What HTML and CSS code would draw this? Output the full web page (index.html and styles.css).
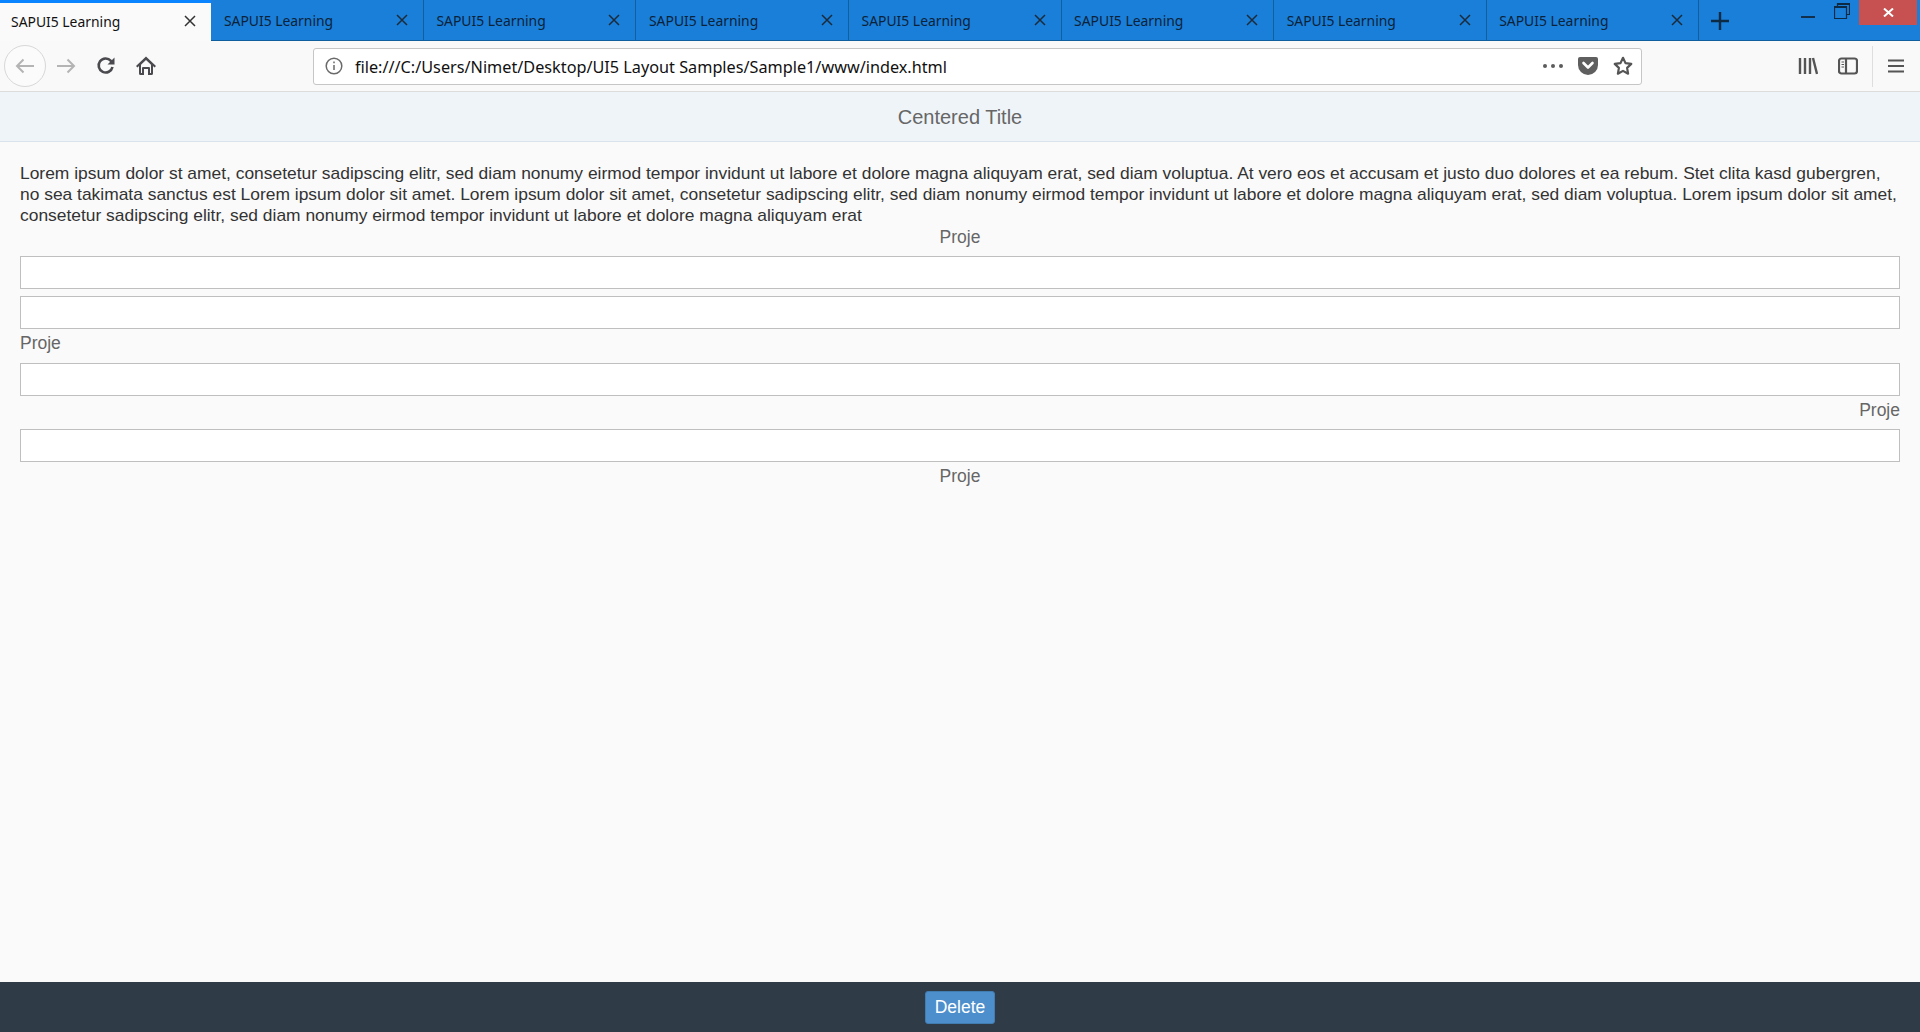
FILE: index.html
```html
<!DOCTYPE html>
<html lang="en">
<head>
<meta charset="utf-8">
<title>SAPUI5 Learning</title>
<link rel="stylesheet" href="styles.css">
</head>
<body>
<div class="browser">
  <div class="tabbar">
    <div class="tab active"><span class="tab-title">SAPUI5 Learning</span><svg class="tab-close" viewBox="0 0 12 12"><path d="M1 1l10 10M11 1L1 11"/></svg></div>
    <div class="tab"><span class="tab-title">SAPUI5 Learning</span><svg class="tab-close" viewBox="0 0 12 12"><path d="M1 1l10 10M11 1L1 11"/></svg></div>
    <div class="tab"><span class="tab-title">SAPUI5 Learning</span><svg class="tab-close" viewBox="0 0 12 12"><path d="M1 1l10 10M11 1L1 11"/></svg></div>
    <div class="tab"><span class="tab-title">SAPUI5 Learning</span><svg class="tab-close" viewBox="0 0 12 12"><path d="M1 1l10 10M11 1L1 11"/></svg></div>
    <div class="tab"><span class="tab-title">SAPUI5 Learning</span><svg class="tab-close" viewBox="0 0 12 12"><path d="M1 1l10 10M11 1L1 11"/></svg></div>
    <div class="tab"><span class="tab-title">SAPUI5 Learning</span><svg class="tab-close" viewBox="0 0 12 12"><path d="M1 1l10 10M11 1L1 11"/></svg></div>
    <div class="tab"><span class="tab-title">SAPUI5 Learning</span><svg class="tab-close" viewBox="0 0 12 12"><path d="M1 1l10 10M11 1L1 11"/></svg></div>
    <div class="tab"><span class="tab-title">SAPUI5 Learning</span><svg class="tab-close" viewBox="0 0 12 12"><path d="M1 1l10 10M11 1L1 11"/></svg></div>
    <svg class="newtab" viewBox="0 0 18 18"><path d="M9 0v18M0 9h18"/></svg>
    <div class="winctl">
      <svg class="win-min" viewBox="0 0 14 2"><rect width="14" height="2"/></svg>
      <svg class="win-max" viewBox="0 0 16 16"><path d="M.5 3.5h12v12H.5zM3.500 3V.5h12v11H13"/><path class="thick" d="M.5 4h12M3.500 1h12"/></svg>
      <div class="win-close"><svg viewBox="0 0 11 9"><path d="M1 .5l9 8M10 .5l-9 8"/></svg></div>
    </div>
  </div>
  <div class="navbar">
    <div class="backbtn"><svg class="nav-ico light" viewBox="0 0 20 16"><path d="M19 8H2M8.500 1.500L2 8l6.500 6.500"/></svg></div>
    <svg class="nav-ico light fwd" viewBox="0 0 20 16"><path d="M1 8h17M11.500 1.500L18 8l-6.500 6.500"/></svg>
    <svg class="nav-ico reload" viewBox="0 0 20 20"><path d="M16.500 11a7 7 0 1 1-1.600-6.200L17 7"/><path class="solid" d="M18.500 1.500v7h-7z"/></svg>
    <svg class="nav-ico home" viewBox="0 0 20 20"><path class="solid" d="M10 .5L0 10l1.500 1.500L3 10v7.500a1.500 1.500 0 0 0 1.500 1.500H8v-6h4v6h3.500a1.500 1.500 0 0 0 1.500-1.500V10l1.500 1.500L20 10zM10 4l5 4.800V17h-1v-5a1 1 0 0 0-1-1H7a1 1 0 0 0-1 1v5H5V8.800z"/></svg>
    <div class="urlbar">
      <svg class="info" viewBox="0 0 18 18"><circle cx="9" cy="9" r="7.800"/><path d="M9 8v5M9 4.500v1.800"/></svg>
      <span class="url">file:///C:/Users/Nimet/Desktop/UI5 Layout Samples/Sample1/www/index.html</span>
      <svg class="dots" viewBox="0 0 20 4"><circle cx="2" cy="2" r="2"/><circle cx="10" cy="2" r="2"/><circle cx="18" cy="2" r="2"/></svg>
      <svg class="pocket" viewBox="0 0 20 18"><path class="pk" d="M2 0h16a2 2 0 0 1 2 2v6a10 10 0 0 1-20 0V2a2 2 0 0 1 2-2z"/><path class="pk-v" d="M5.500 6L10 10.500 14.500 6"/></svg>
      <svg class="star" viewBox="0 0 20 20"><path d="M10 1.800l2.500 5.300 5.800.8-4.200 4 1 5.800-5.100-2.800-5.100 2.800 1-5.800-4.200-4 5.800-.8z"/></svg>
    </div>
    <div class="nav-right">
      <svg class="library" viewBox="0 0 20 18"><path d="M2 1v16M7 1v16M12 1v16M15 1l4 16"/></svg>
      <svg class="sidebar" viewBox="0 0 20 18"><rect x="1" y="1.500" width="18" height="15" rx="2.500"/><path d="M8 1.500v15"/><path class="thin" d="M3.500 5H6M3.500 7.500H6M3.500 10H6"/></svg>
      <span class="sep"></span>
      <svg class="menu" viewBox="0 0 16 14"><path d="M0 1.500h16M0 7h16M0 12.500h16"/></svg>
    </div>
  </div>
</div>
<div class="app">
  <header class="app-header">Centered Title</header>
  <main class="content">
    <p class="lorem">Lorem ipsum dolor st amet, consetetur sadipscing elitr, sed diam nonumy eirmod tempor invidunt ut labore et dolore magna aliquyam erat, sed diam voluptua. At vero eos et accusam et justo duo dolores et ea rebum. Stet clita kasd gubergren, no sea takimata sanctus est Lorem ipsum dolor sit amet. Lorem ipsum dolor sit amet, consetetur sadipscing elitr, sed diam nonumy eirmod tempor invidunt ut labore et dolore magna aliquyam erat, sed diam voluptua. Lorem ipsum dolor sit amet, consetetur sadipscing elitr, sed diam nonumy eirmod tempor invidunt ut labore et dolore magna aliquyam erat</p>
    <label class="lbl center first">Proje</label>
    <input class="field f1" type="text">
    <input class="field f2" type="text">
    <label class="lbl">Proje</label>
    <input class="field f3" type="text">
    <label class="lbl right">Proje</label>
    <input class="field f4" type="text">
    <label class="lbl center">Proje</label>
  </main>
  <footer class="app-footer"><button class="delete" type="button">Delete</button></footer>
</div>
</body>
</html>
```
FILE: styles.css
```css
* { box-sizing: border-box; }
html, body { margin: 0; height: 100%; overflow: hidden; }
body {
  display: flex;
  flex-direction: column;
  height: 1032px;
  background: #fafafa;
  font-family: "Liberation Sans", Arial, sans-serif;
}
svg { display: block; flex: none; }

.tabbar {
  display: flex;
  height: 41px;
  background: #1a7fd8;
  border-bottom: 1px solid #0f5f9f;
  align-items: stretch;
}
.tab {
  width: 212.55px;
  display: flex;
  align-items: center;
  justify-content: space-between;
  padding: 0 14px 0 12.5px;
  border-right: 1px solid #135f9e;
  color: #0c2238;
  font: 13.9px "Noto Sans", sans-serif;
}
.tab.active {
  width: 211.4px;
  height: 41px;
  padding: 0 14px 3px 11px;
  background: #fafafa;
  border-top: 3px solid #0a84ff;
  border-right: 0;
  color: #111;
}
.tab-title { padding-top: 1px; }
.tab-close { width: 12px; height: 12px; fill: none; stroke: #1b2b3c; stroke-width: 1.5; margin-right: 1px; }
.tab.active .tab-close { stroke: #333; }
.newtab { width: 18px; height: 18px; margin: 12px 0 0 12px; fill: none; stroke: #0d2a44; stroke-width: 2.4; }
.winctl { margin-left: auto; display: flex; align-items: flex-start; height: 24px; }
.win-min { width: 14px; height: 2px; margin: 16px 19px 0 0; fill: #12304c; }
.win-max { width: 16px; height: 16px; margin: 3px 9px 0 0; fill: none; stroke: #0d2a44; stroke-width: 1.2; }
.win-max .thick { stroke-width: 2; }
.win-close {
  width: 58px;
  height: 25px;
  margin-right: 3px;
  background: #c75050;
  display: flex;
  align-items: center;
  justify-content: center;
}
.win-close svg { width: 11px; height: 9px; fill: none; stroke: #fff; stroke-width: 2; }

.navbar {
  height: 51px;
  background: #f9f9fa;
  border-bottom: 1px solid #dcdcdc;
  display: flex;
  align-items: center;
  padding-left: 4px;
}
.backbtn {
  width: 42px;
  height: 42px;
  border: 1px solid #d8d8d8;
  border-radius: 50%;
  display: flex;
  align-items: center;
  justify-content: center;
  background: #fbfbfb;
}
.nav-ico { fill: none; stroke-width: 2; }
.nav-ico.light { width: 20px; height: 16px; stroke: #b4b4b4; }
.fwd { margin-left: 10px; }
.reload { width: 20px; height: 20px; margin-left: 20px; stroke: #4a4a4f; stroke-width: 2.6; }
.solid { fill: #4a4a4f; stroke: none; }
.home { width: 20px; height: 20px; margin-left: 20px; }
.urlbar {
  width: 1329px;
  height: 37px;
  margin-left: 157px;
  display: flex;
  align-items: center;
  background: #fff;
  border: 1px solid #c6c6c6;
  border-radius: 3px;
  padding: 0 8px 0 11px;
}
.info { width: 18px; height: 18px; fill: none; stroke: #6a6a6a; stroke-width: 1.5; }
.url { margin-left: 12px; padding-top: 1px; font: 16.24px "Noto Sans", sans-serif; color: #111; flex: 1; white-space: nowrap; }
.dots { width: 20px; height: 4px; fill: #5c5c5c; }
.pocket { width: 20px; height: 18px; margin-left: 15px; }
.pk { fill: #5f5f5f; }
.pk-v { fill: none; stroke: #fff; stroke-width: 2.6; stroke-linecap: round; stroke-linejoin: round; }
.star { width: 20px; height: 20px; margin-left: 15px; fill: none; stroke: #555; stroke-width: 2.2; stroke-linejoin: round; }
.nav-right { margin-left: auto; display: flex; align-items: center; height: 41px; padding-right: 16px; }
.library { width: 20px; height: 18px; fill: none; stroke: #555; stroke-width: 2.4; }
.sidebar { width: 20px; height: 18px; margin-left: 20px; fill: none; stroke: #555; stroke-width: 2.2; }
.sidebar .thin { stroke-width: 1; }
.sep { width: 1px; height: 41px; background: #dedede; margin-left: 14px; }
.menu { width: 16px; height: 14px; margin-left: 15px; fill: none; stroke: #555; stroke-width: 2.2; }

.app { flex: 1; display: flex; flex-direction: column; min-height: 0; }
.app-header {
  height: 50px;
  background: #eff4f9;
  border-bottom: 1px solid #d9e3ee;
  color: #666;
  font-size: 20px;
  line-height: 51px;
  text-align: center;
}
.content { flex: 1; padding: 21px 20px 0; min-height: 0; }
.lorem { margin: 0; font-size: 17.42px; line-height: 21px; color: #333; }
.lbl { display: block; height: 21px; margin-top: 3px; font-size: 17.5px; line-height: 23px; color: #666; }
.lbl.first { margin-top: 0; }
.center { text-align: center; }
.right { text-align: right; }
.field {
  display: block;
  width: 100%;
  height: 33px;
  padding: 0;
  background: #fff;
  border: 1px solid #bfbfbf;
  border-radius: 0;
  outline: 0;
}
.f1 { margin: 9px 0 0; }
.f2 { margin: 7px 0 0; }
.f3 { margin: 10px 0 0; }
.f4 { margin: 9px 0 0; }

.app-footer {
  height: 50px;
  background: #2f3c48;
  display: flex;
  align-items: center;
  justify-content: center;
  padding-top: 1px;
}
.delete {
  width: 70px;
  height: 33px;
  padding: 0;
  background: #4c8fcc;
  border: 1px solid #427db2;
  border-radius: 3px;
  color: #fff;
  font: 17.5px "Liberation Sans", Arial, sans-serif;
}
```
